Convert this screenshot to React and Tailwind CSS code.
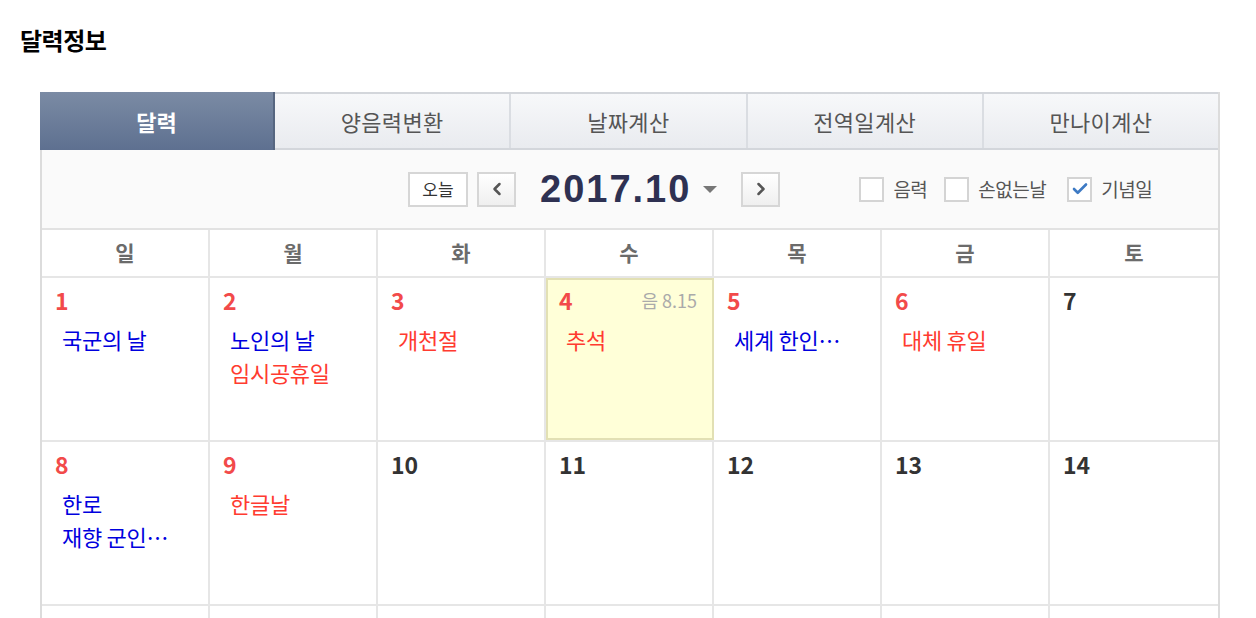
import { Check, ChevronLeft, ChevronRight } from 'lucide-react';

const TABS = ['달력', '양음력변환', '날짜계산', '전역일계산', '만나이계산'];
const WEEKDAYS = ['일', '월', '화', '수', '목', '금', '토'];

// events: [text, color]
const WEEKS = [
  [
    { d: 1, red: true, ev: [['국군의 날', 'blue']] },
    { d: 2, red: true, ev: [['노인의 날', 'blue'], ['임시공휴일', 'red']] },
    { d: 3, red: true, ev: [['개천절', 'red']] },
    { d: 4, red: true, today: true, lunar: '음 8.15', ev: [['추석', 'red']] },
    { d: 5, red: true, ev: [['세계 한인…', 'blue']] },
    { d: 6, red: true, ev: [['대체 휴일', 'red']] },
    { d: 7, ev: [] },
  ],
  [
    { d: 8, red: true, ev: [['한로', 'blue'], ['재향 군인…', 'blue']] },
    { d: 9, red: true, ev: [['한글날', 'red']] },
    { d: 10, ev: [] },
    { d: 11, ev: [] },
    { d: 12, ev: [] },
    { d: 13, ev: [] },
    { d: 14, ev: [] },
  ],
];

function Checkbox({ checked, label }) {
  return (
    <label className="flex items-center gap-[9px]">
      <span className="w-[25px] h-[25px] border-2 border-[#d4d4d4] bg-white flex items-center justify-center">
        {checked && <Check size={18} strokeWidth={3.5} className="text-[#3d7ac4]" />}
      </span>
      <span className="text-[19px] text-[#555] tracking-[-0.5px]">{label}</span>
    </label>
  );
}

export default function App() {
  return (
    <div
      className="bg-white w-[1256px] h-[618px] overflow-hidden"
      style={{ fontFamily: '"Noto Sans CJK KR", "Noto Sans", sans-serif' }}
    >
      <h1 className="pl-[20px] pt-[24px] text-[24px] font-bold text-black leading-[32px] tracking-[-0.5px]">달력정보</h1>

      <div className="ml-[40px] mt-[36px] w-[1180px] border-l-2 border-r-2 border-[#dcdcdc]">
        {/* tabs */}
        <div className="flex h-[58px] border-t-2 border-b-2 border-[#d3d6db]">
          {TABS.map((t, i) =>
            i === 0 ? (
              <div
                key={t}
                className="w-[235px] flex items-center justify-center bg-gradient-to-b from-[#7b8ba4] to-[#5e7090] text-white text-[22px] font-bold border-r-2 border-[#566680] -mt-[2px] -mb-[2px] -ml-[2px]"
              >
                {t}
              </div>
            ) : (
              <div
                key={t}
                className={`flex-1 flex items-center justify-center bg-gradient-to-b from-[#f7f8fa] to-[#e9ebef] text-[#555] text-[22px] tracking-[0.3px] ${i < 4 ? 'border-r-2 border-[#dadde2]' : ''}`}
              >
                {t}
              </div>
            )
          )}
        </div>

        {/* toolbar */}
        <div className="h-[80px] bg-[#fafafa] flex items-center border-b-2 border-[#e2e2e2]">
          <button className="ml-[366px] w-[60px] h-[35px] border-2 border-[#d6d6d6] bg-white text-[17px] text-[#333] flex items-center justify-center">
            오늘
          </button>
          <button className="ml-[9px] w-[39px] h-[35px] border-2 border-[#d6d6d6] bg-gradient-to-b from-white to-[#efefef] flex items-center justify-center">
            <ChevronLeft size={20} strokeWidth={3} className="text-[#555]" />
          </button>
          <div
            className="ml-[24px] text-[38px] font-bold text-[#2e3152] leading-none tracking-[2px]"
            style={{ fontFamily: '"Liberation Sans", Arial, sans-serif' }}
          >
            2017.10
          </div>
          <svg width="14" height="8" viewBox="0 0 14 8" className="ml-[12px] mt-[2px]">
            <path d="M0 0 L14 0 L7 7 Z" fill="#777" />
          </svg>
          <button className="ml-[24px] w-[39px] h-[35px] border-2 border-[#d6d6d6] bg-gradient-to-b from-white to-[#efefef] flex items-center justify-center">
            <ChevronRight size={20} strokeWidth={3} className="text-[#555]" />
          </button>
          <div className="ml-[79px] flex items-center gap-[17px]">
            <Checkbox label="음력" />
            <Checkbox label="손없는날" />
            <div className="ml-[4px]">
              <Checkbox checked label="기념일" />
            </div>
          </div>
        </div>

        {/* weekday header */}
        <div className="grid grid-cols-7 h-[48px] border-b-2 border-[#e6e6e6]">
          {WEEKDAYS.map((w, i) => (
            <div
              key={w}
              className={`flex items-center justify-center text-[21px] font-bold text-[#6b6b6b] ${i < 6 ? 'border-r-2 border-[#e6e6e6]' : ''}`}
            >
              {w}
            </div>
          ))}
        </div>

        {/* weeks */}
        {WEEKS.map((week, wi) => (
          <div key={wi} className="grid grid-cols-7 h-[164px] border-b-2 border-[#e6e6e6]">
            {week.map((c, i) => (
              <div
                key={c.d}
                className={`relative px-[13px] pt-[6px] ${i < 6 ? 'border-r-2 border-[#e6e6e6]' : ''} ${c.today ? 'bg-[#ffffd8] outline-2 outline-[#e2e0b4] -outline-offset-2' : ''}`}
              >
                <div className="flex items-start justify-between">
                  <span className={`text-[23px] font-bold leading-[32px] ${c.red ? 'text-[#f24a4a]' : 'text-[#333]'}`}>
                    {c.d}
                  </span>
                  {c.lunar && <span className="text-[18px] text-[#aaa] leading-[32px] pr-[2px]">{c.lunar}</span>}
                </div>
                <div className="mt-[7px] pl-[7px]">
                  {c.ev.map(([t, col]) => (
                    <div
                      key={t}
                      className={`text-[22px] leading-[33px] whitespace-nowrap tracking-[-0.3px] ${col === 'blue' ? 'text-[#0000de]' : 'text-[#ff3b30]'}`}
                    >
                      {t}
                    </div>
                  ))}
                </div>
              </div>
            ))}
          </div>
        ))}

        {/* next week row (below the fold) */}
        <div className="grid grid-cols-7 h-[164px]">
          {WEEKDAYS.map((w, i) => (
            <div key={w} className={i < 6 ? 'border-r-2 border-[#e6e6e6]' : ''} />
          ))}
        </div>
      </div>
    </div>
  );
}
